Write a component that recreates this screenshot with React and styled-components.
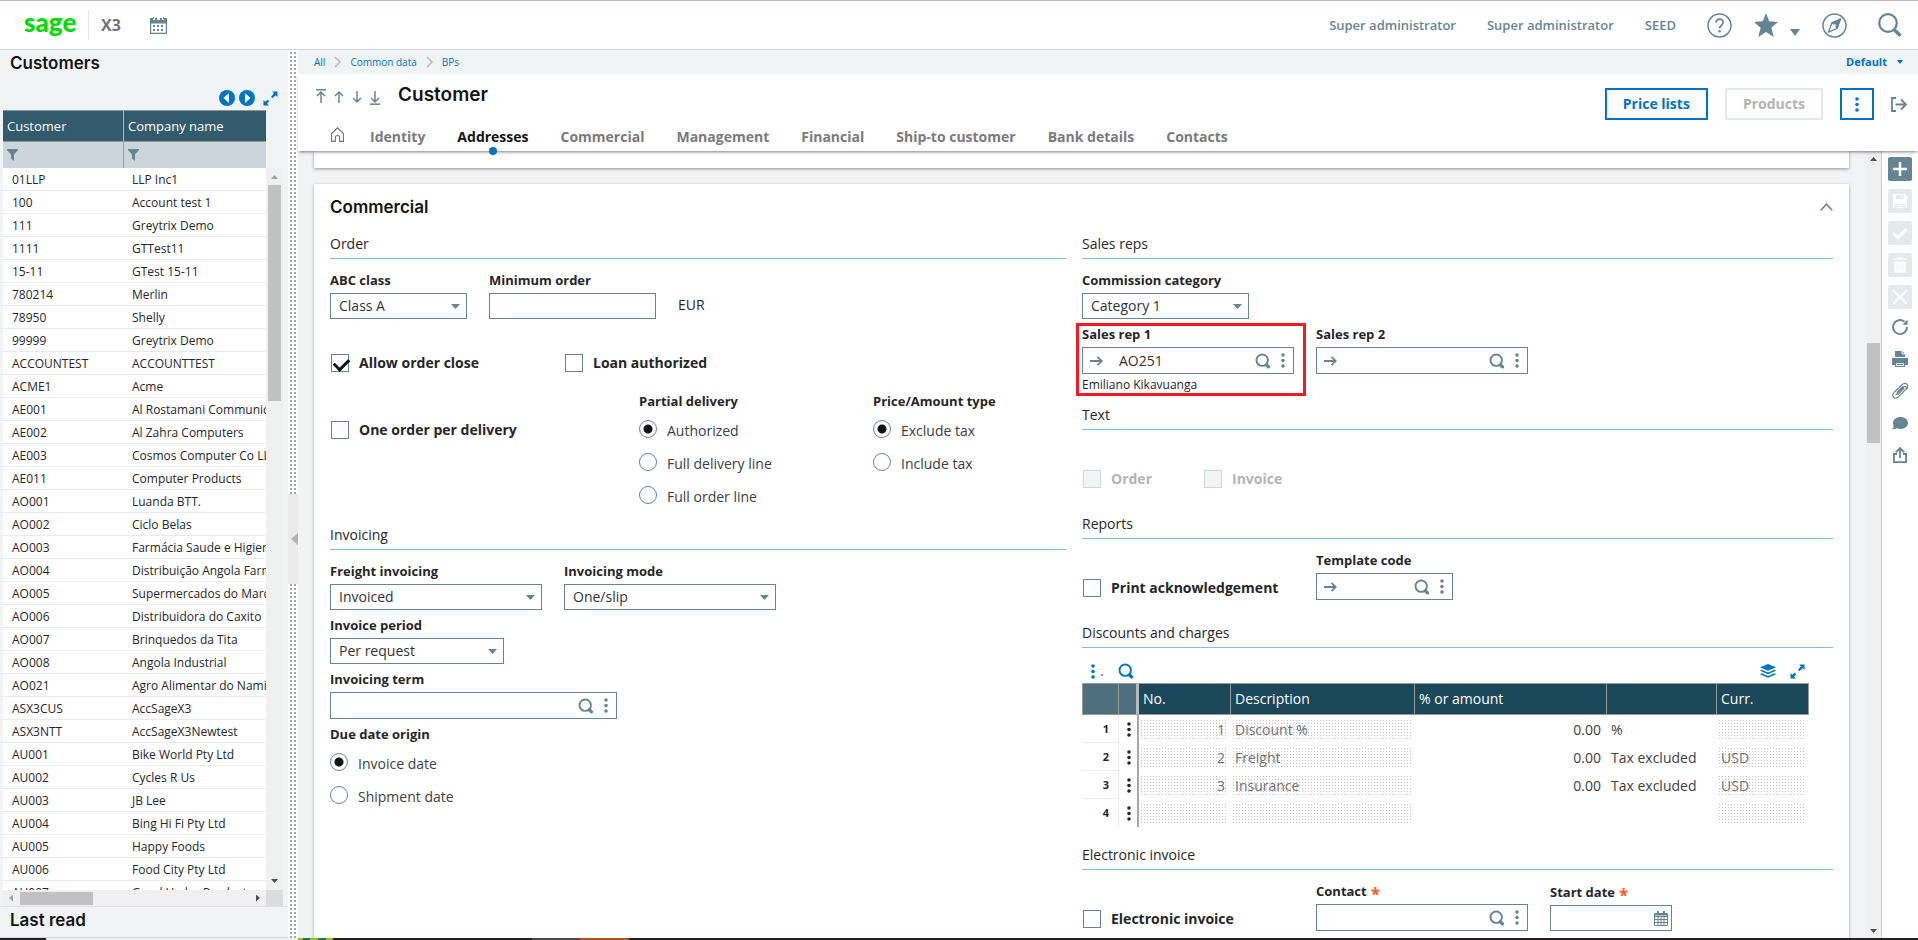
import { Fragment, useState } from 'react'
import styled, { createGlobalStyle } from 'styled-components';

const customers = [
    ['01LLP', 'LLP Inc1'],
    ['100', 'Account test 1'],
    ['111', 'Greytrix Demo'],
    ['1111', 'GTTest11'],
    ['15-11', 'GTest 15-11'],
    ['780214', 'Merlin'],
    ['78950', 'Shelly'],
    ['99999', 'Greytrix Demo'],
    ['ACCOUNTEST', 'ACCOUNTTEST'],
    ['ACME1', 'Acme'],
    ['AE001', 'Al Rostamani Communication'],
    ['AE002', 'Al Zahra Computers'],
    ['AE003', 'Cosmos Computer Co LLC'],
    ['AE011', 'Computer Products'],
    ['AO001', 'Luanda BTT.'],
    ['AO002', 'Ciclo Belas'],
    ['AO003', 'Farmácia Saude e Higiene'],
    ['AO004', 'Distribuição Angola Farma'],
    ['AO005', 'Supermercados do Marques'],
    ['AO006', 'Distribuidora do Caxito'],
    ['AO007', 'Brinquedos da Tita'],
    ['AO008', 'Angola Industrial'],
    ['AO021', 'Agro Alimentar do Namibe'],
    ['ASX3CUS', 'AccSageX3'],
    ['ASX3NTT', 'AccSageX3Newtest'],
    ['AU001', 'Bike World Pty Ltd'],
    ['AU002', 'Cycles R Us'],
    ['AU003', 'JB Lee'],
    ['AU004', 'Bing Hi Fi Pty Ltd'],
    ['AU005', 'Happy Foods'],
    ['AU006', 'Food City Pty Ltd'],
    ['AU007', 'Good Hydro Product'],
]

const tabs = ['Identity', 'Addresses', 'Commercial', 'Management', 'Financial', 'Ship-to customer', 'Bank details', 'Contacts']

const charges = [
    { no: '1', description: 'Discount %', amount: '0.00', type: '%', currency: '' },
    { no: '2', description: 'Freight', amount: '0.00', type: 'Tax excluded', currency: 'USD' },
    { no: '3', description: 'Insurance', amount: '0.00', type: 'Tax excluded', currency: 'USD' },
    { no: '', description: '', amount: '', type: '', currency: '' },
]

/* ---------- icons ---------- */

const SearchIcon = ({ size = 16 }) => (
    <svg width={size} height={size} viewBox="0 0 16 16" fill="none" stroke="currentColor">
        <circle cx="7.200" cy="7.200" r="5.700" strokeWidth="1.900" />
        <path d="m11.600 12 1.900 1.900" strokeWidth="3.200" strokeLinecap="round" />
    </svg>
)

const DotsIcon = () => (
    <svg width="4" height="15" viewBox="0 0 4 15" fill="currentColor">
        <circle cx="2" cy="2" r="1.8" />
        <circle cx="2" cy="7.5" r="1.8" />
        <circle cx="2" cy="13" r="1.8" />
    </svg>
)

const ArrowRightIcon = () => (
    <svg width="13" height="12" viewBox="0 0 13 12" fill="none" stroke="currentColor" strokeWidth="1.8">
        <path d="M0 6h11.5M7.5 1.8 11.8 6 7.5 10.2" />
    </svg>
)

const CaretIcon = ({ width = 9, height = 5 }) => (
    <svg width={width} height={height} viewBox="0 0 10 6" preserveAspectRatio="none" fill="currentColor">
        <path d="M0 0h10L5 6z" />
    </svg>
)

const ExpandIcon = () => (
    <svg width="15" height="15" viewBox="0 0 15 15" fill="currentColor">
        <path d="M9 .5h5.500V6l-1.800-1.800-3.400 3L8 5.800l3-3.500zM6 14.500H.5V9l1.800 1.800L4.700 8.700 6.200 10 4.100 12.700z" />
    </svg>
)

const CalendarIcon = () => (
    <svg width="17" height="17" viewBox="0 0 17 17" fill="currentColor">
        <path d="M0 1h3v2h2V1h2v2h3V1h2v2h2V1h3v16H0zM1.200 6.500v9.300h14.600V6.500z" fillRule="evenodd" />
        <path d="M3 0h1v2H3zM13 0h1v2h-1z" />
        <path d="M3 8h2v2H3zM7 8h2v2H7zM11 8h2v2h-2zM3 12h2v2H3zM7 12h2v2H7zM11 12h2v2h-2z" />
    </svg>
)

const DateIcon = () => (
    <svg width="14" height="15" viewBox="0 0 14 15" fill="none" stroke="currentColor">
        <path d="M.5 2.500h13v12H.5zM.5 5.500h13M.5 8.500h13M.5 11.500h13M4 5v9M7 5v9M10 5v9" />
        <path d="M4 0v4M10 0v4" strokeWidth="2" />
        <path d="M1 3.500h12" strokeWidth="2" />
    </svg>
)

const HelpIcon = () => (
    <svg width="25" height="25" viewBox="0 0 25 25" fill="none" stroke="currentColor">
        <circle cx="12.500" cy="12.500" r="11.500" strokeWidth="1.500" />
        <path d="M9 9.800c0-2.300 1.500-3.600 3.600-3.600s3.500 1.300 3.500 3.200c0 2.600-3.500 2.800-3.500 6.100" strokeWidth="1.700" />
        <circle cx="12.600" cy="18.300" r="1.200" fill="currentColor" stroke="none" />
    </svg>
)

const StarIcon = () => (
    <svg width="24" height="24" viewBox="0 0 24 24" fill="currentColor">
        <path d="m12 0 3.200 8.300 8.800.7-6.600 5.800 2.300 9.200L12 18.900 4.300 24l2.300-9.200L0 9l8.800-.7z" />
    </svg>
)

const CompassIcon = () => (
    <svg width="25" height="25" viewBox="0 0 25 25" fill="none" stroke="currentColor">
        <circle cx="12.500" cy="12.500" r="11.500" strokeWidth="1.500" />
        <path d="m18.500 6-3.300 9.300-8.700 3.700 3.400-9.200z" strokeWidth="1.300" />
        <path d="m18.500 6-8.600 3.800 1.600 1.300 2.500 2.800 1.200 1.400z" fill="currentColor" />
        <circle cx="12.500" cy="12.500" r="1.300" fill="#fff" stroke="none" />
    </svg>
)

const BigSearchIcon = () => (
    <svg width="24" height="24" viewBox="0 0 24 24" fill="none" stroke="currentColor">
        <circle cx="10" cy="10" r="8.800" strokeWidth="2.200" />
        <path d="m16 16.500 6.500 6.300" strokeWidth="3.400" />
    </svg>
)

const FunnelIcon = () => (
    <svg width="11" height="12" viewBox="0 0 11 12" fill="currentColor">
        <path d="M0 0h11v1L7 5.500V12L4 9.500v-4L0 1z" />
    </svg>
)

const RoundArrowIcon = ({ next }) => (
    <svg width="16" height="16" viewBox="0 0 16 16">
        <circle cx="8" cy="8" r="8" fill="currentColor" />
        <path d={next ? 'M6 3v10l5.500-5z' : 'M10 3v10L4.500 8z'} fill="#fff" />
    </svg>
)

const MoveIcon = ({ down, bar }) => (
    <svg width="10" height="16" viewBox="0 0 10 16" fill="none" stroke="currentColor" strokeWidth="1.500">
        <path d={down ? 'M5 2v11M1 9l4 4 4-4' : 'M5 14V3M1 7l4-4 4 4'} />
        {bar && <path d={down ? 'M0 15.200h10' : 'M0 .8h10'} />}
    </svg>
)

const HomeIcon = () => (
    <svg width="13" height="15" viewBox="0 0 13 15" fill="none" stroke="currentColor" strokeWidth="1.100">
        <path d="M.6 6.500 6.500.8l5.900 5.700v7.900H8.600V9.500q-2.100-2-4.200 0v4.900H.6z" />
    </svg>
)

const ExitIcon = () => (
    <svg width="16" height="15" viewBox="0 0 16 15" fill="none" stroke="currentColor" strokeWidth="1.800">
        <path d="M5 1H1v13h4M4.500 7.500h10M10 2.500l5 5-5 5" />
    </svg>
)

const LayersIcon = () => (
    <svg width="16" height="14" viewBox="0 0 16 14" fill="currentColor">
        <path d="m8 0 8 3.300-8 3.400-8-3.400z" />
        <path d="m1.500 5.800 6.500 2.700 6.500-2.700 1.500.9L8 10.200 0 6.700zM1.500 9.300 8 12l6.500-2.700 1.500.9-8 3.600-8-3.600z" />
    </svg>
)

const ChevronIcon = () => (
    <svg width="7" height="12" viewBox="0 0 7 12" fill="none" stroke="currentColor" strokeWidth="1.500">
        <path d="m1 1 5 5-5 5" />
    </svg>
)

const CollapseIcon = () => (
    <svg width="13" height="8" viewBox="0 0 13 8" fill="none" stroke="currentColor" strokeWidth="1.500">
        <path d="m.8 7.200 5.700-6 5.700 6" />
    </svg>
)

const railIcons = {
    add: <path d="M9 2v14M2 9h14" stroke="currentColor" strokeWidth="2.400" />,
    save: <path d="M2 2h12l2 2v12h-2v-4H4v4H2zM5 3v4h8V3zM5.500 13h7v1h-7zM5.500 15h7v1h-7zM10.500 3.800h1.500v2h-1.500z" fill="currentColor" fillRule="evenodd" />,
    valid: <path d="m2.500 9.500 4.500 4L15.500 5" fill="none" stroke="currentColor" strokeWidth="2.800" />,
    remove: <path d="M6 2V1h6v1h4v2H2V2zM3 5h12v10l-1 2H4l-1-2zM6 7.500v7M9 7.500v7M12 7.500v7" fill="currentColor" stroke="#e4eaec" strokeWidth=".8" />,
    cancel: <path d="m2.500 2.500 13 13M15.500 2.500l-13 13" stroke="currentColor" strokeWidth="2" />,
    refresh: (
        <>
            <path d="M16 9a7 7 0 1 1-2.500-5.300" fill="none" stroke="currentColor" strokeWidth="1.900" />
            <path d="M16.600 1.500v5.200h-5z" fill="currentColor" />
        </>
    ),
    print: (
        <>
            <path d="M4 1h7l3 3v3H4zM1 8h16v7h-3v-3H4v3H1z" fill="currentColor" />
            <path d="M4.600 12.600h8.800v3.900H4.600zM6 14.500h6" fill="none" stroke="currentColor" strokeWidth="1.200" />
            <path d="M11 1v3h3" fill="none" stroke="#fff" strokeWidth=".8" />
        </>
    ),
    attach: <path d="m4.500 13.200 8.200-8.400q1.400-1 2.300 0 .9 1-.1 2.200L8 14.300q-2.900 3-5.400 1.200-2-2.300.4-5.200L10.700 3q3-2.700 5.200-.7 2 2.200-.4 5.100M5.900 10.300l6-6M6.600 12.800l6.500-6.700" fill="none" stroke="currentColor" strokeWidth="1.200" />,
    comment: <path d="M9.500 3c4.300 0 7.500 2.600 7.500 6s-3.200 6-7.500 6q-2 0-3.500-.7Q4 15.500 1 15.300q1.700-1.200 1.600-2.600Q2 11 2 9c0-3.400 3.200-6 7.500-6z" fill="currentColor" />,
    share: <path d="M6 8H2.900v8.100h12.200V8H12M9 12V2.500M4.800 6.300 9 2l4.200 4.300" fill="none" stroke="currentColor" strokeWidth="1.800" />,
}

/* ---------- form parts ---------- */

const SelectField = ({ id, label, value, width }) => (
    <Field>
        <FieldLabel htmlFor={id}>{label}</FieldLabel>
        <SelectBox $width={width}>
            <select id={id} defaultValue={value}>
                <option>{value}</option>
            </select>
            <CaretIcon />
        </SelectBox>
    </Field>
)

const LookupField = ({ id, label, value = '', width, jump, required, note }) => (
    <Field>
        <FieldLabel htmlFor={id}>{label}{required && <Required>*</Required>}</FieldLabel>
        <LookupBox $width={width}>
            {jump && <BoxButton aria-label="Open record"><ArrowRightIcon /></BoxButton>}
            <input id={id} defaultValue={value} />
            <BoxButton aria-label="Search"><SearchIcon /></BoxButton>
            <BoxButton aria-label="Actions"><DotsIcon /></BoxButton>
        </LookupBox>
        {note && <Note>{note}</Note>}
    </Field>
)

const Check = ({ label, checked, disabled }) => (
    <CheckLabel $disabled={disabled}>
        <input type="checkbox" defaultChecked={checked} disabled={disabled} />
        {label}
    </CheckLabel>
)

const RadioGroup = ({ name, label, options }) => {
    const [selected, setSelected] = useState(options[0])

    return (
        <RadioSet role="radiogroup" aria-label={label}>
            <FieldLabel as="p">{label}</FieldLabel>
            {options.map((option) => (
                <RadioLabel key={option}>
                    <input type="radio" name={name} checked={selected === option} onChange={() => setSelected(option)} />
                    <span>{option}</span>
                </RadioLabel>
            ))}
        </RadioSet>
    )
}

/* ---------- page areas ---------- */

const Sidebar = () => (
    <SidebarArea>
        <SideTitle>Customers</SideTitle>
        <SideTools>
            <IconButton $blue aria-label="Previous"><RoundArrowIcon /></IconButton>
            <IconButton $blue aria-label="Next"><RoundArrowIcon next /></IconButton>
            <IconButton $blue aria-label="Expand"><ExpandIcon /></IconButton>
        </SideTools>
        <ListFrame>
            <ListView>
                <CustomerTable>
                    <colgroup>
                        <col className="code" />
                        <col />
                    </colgroup>
                    <thead>
                        <tr>
                            <th>Customer</th>
                            <th>Company name</th>
                        </tr>
                        <tr>
                            <td><FunnelIcon /></td>
                            <td><FunnelIcon /></td>
                        </tr>
                    </thead>
                    <tbody>
                        {customers.map(([code, company]) => (
                            <tr key={code}>
                                <td>{code}</td>
                                <td>{company}</td>
                            </tr>
                        ))}
                    </tbody>
                </CustomerTable>
            </ListView>
            <SideScroll>
                <ScrollArrow $dir="up" $dim />
                <i />
                <ScrollArrow $dir="down" />
            </SideScroll>
        </ListFrame>
        <SideScrollX>
            <div>
                <ScrollArrow $dir="left" $dim />
                <i />
                <ScrollArrow $dir="right" />
            </div>
        </SideScrollX>
        <LastRead>Last read</LastRead>
    </SidebarArea>
)

const ChargesTable = () => (
    <ChargesArea>
        <ChargesTools>
            <IconButton $blue aria-label="Actions"><DotsIcon /><span>.</span></IconButton>
            <IconButton $blue aria-label="Search"><SearchIcon /></IconButton>
            <IconButton $blue aria-label="Layers"><LayersIcon /></IconButton>
            <IconButton $blue aria-label="Expand"><ExpandIcon /></IconButton>
        </ChargesTools>
        <Charges>
            <colgroup>
                <col className="line" />
                <col className="menu" />
                <col className="no" />
                <col className="description" />
                <col className="amount" />
                <col className="type" />
                <col />
            </colgroup>
            <thead>
                <tr>
                    <th />
                    <th />
                    <th>No.</th>
                    <th>Description</th>
                    <th>% or amount</th>
                    <th />
                    <th>Curr.</th>
                </tr>
            </thead>
            <tbody>
                {charges.map((row, index) => (
                    <tr key={index}>
                        <th>{index + 1}</th>
                        <td className="menu"><button aria-label={`Line ${index + 1}`}><DotsIcon /></button></td>
                        <td><CellText $locked $right>{row.no}</CellText></td>
                        <td><CellText $locked>{row.description}</CellText></td>
                        <td><CellText $right>{row.amount}</CellText></td>
                        <td><CellText>{row.type}</CellText></td>
                        <td><CellText $locked>{row.currency}</CellText></td>
                    </tr>
                ))}
            </tbody>
        </Charges>
    </ChargesArea>
)

const App = () => {
    const [activeTab, setActiveTab] = useState('Addresses')

    return (
        <Page>
            <GlobalStyle />
            <TopBar>
                <Logo href="#">sage</Logo>
                <Product>X3</Product>
                <IconButton aria-label="Calendar"><CalendarIcon /></IconButton>
                <TopLinks>
                    <a href="#">Super administrator</a>
                    <a href="#">Super administrator</a>
                    <a href="#">SEED</a>
                    <TopIcons>
                        <IconButton aria-label="Help"><HelpIcon /></IconButton>
                        <IconButton aria-label="Favorites"><StarIcon /><CaretIcon width={10} height={7} /></IconButton>
                        <IconButton aria-label="Navigation"><CompassIcon /></IconButton>
                    </TopIcons>
                    <IconButton aria-label="Search"><BigSearchIcon /></IconButton>
                </TopLinks>
            </TopBar>

            <Body>
                <Sidebar />
                <Splitter><button aria-label="Collapse list" /></Splitter>

                <Main>
                    <Breadcrumb>
                        {['All', 'Common data', 'BPs'].map((item, index) => (
                            <Fragment key={item}>
                                {index > 0 && <ChevronIcon />}
                                <a href="#">{item}</a>
                            </Fragment>
                        ))}
                        <button>Default <CaretIcon width={6} height={4} /></button>
                    </Breadcrumb>

                    <Header>
                        <div>
                            <TitleRow>
                                <IconButton aria-label="First"><MoveIcon bar /></IconButton>
                                <IconButton aria-label="Previous"><MoveIcon /></IconButton>
                                <IconButton aria-label="Next"><MoveIcon down /></IconButton>
                                <IconButton aria-label="Last"><MoveIcon down bar /></IconButton>
                                <h1>Customer</h1>
                            </TitleRow>
                            <Tabs>
                                <a href="#" aria-label="Home"><HomeIcon /></a>
                                {tabs.map((tab) => (
                                    <Tab key={tab} $active={tab === activeTab} onClick={() => setActiveTab(tab)}>{tab}</Tab>
                                ))}
                            </Tabs>
                        </div>
                        <Actions>
                            <ActionButton>Price lists</ActionButton>
                            <ActionButton disabled>Products</ActionButton>
                            <ActionButton $narrow aria-label="More"><DotsIcon /></ActionButton>
                            <IconButton aria-label="Exit"><ExitIcon /></IconButton>
                        </Actions>
                    </Header>

                    <Work>
                        <Sheet>
                            <PreviousCard />
                            <Card>
                                <CardTitle>
                                    <h2>Commercial</h2>
                                    <IconButton aria-label="Collapse"><CollapseIcon /></IconButton>
                                </CardTitle>
                                <Columns>
                                    <div>
                                        <SectionTitle>Order</SectionTitle>
                                        <OrderRow>
                                            <SelectField id="abc" label="ABC class" value="Class A" width={137} />
                                            <Field>
                                                <FieldLabel htmlFor="minimum">Minimum order</FieldLabel>
                                                <PlainInput id="minimum" />
                                            </Field>
                                            <Unit>EUR</Unit>
                                        </OrderRow>
                                        <OrderChecks>
                                            <Check label="Allow order close" checked />
                                            <Check label="Loan authorized" />
                                        </OrderChecks>
                                        <DeliveryRow>
                                            <Check label="One order per delivery" />
                                            <RadioGroup name="delivery" label="Partial delivery" options={['Authorized', 'Full delivery line', 'Full order line']} />
                                            <RadioGroup name="price" label="Price/Amount type" options={['Exclude tax', 'Include tax']} />
                                        </DeliveryRow>

                                        <SectionTitle>Invoicing</SectionTitle>
                                        <FieldRow>
                                            <SelectField id="freight" label="Freight invoicing" value="Invoiced" width={212} />
                                            <SelectField id="mode" label="Invoicing mode" value="One/slip" width={212} />
                                        </FieldRow>
                                        <FieldRow>
                                            <SelectField id="period" label="Invoice period" value="Per request" width={174} />
                                        </FieldRow>
                                        <FieldRow>
                                            <LookupField id="term" label="Invoicing term" width={287} />
                                        </FieldRow>
                                        <RadioGroup name="due" label="Due date origin" options={['Invoice date', 'Shipment date']} />
                                    </div>

                                    <div>
                                        <SectionTitle>Sales reps</SectionTitle>
                                        <FieldRow>
                                            <SelectField id="commission" label="Commission category" value="Category 1" width={167} />
                                        </FieldRow>
                                        <RepRow>
                                            <Highlight>
                                                <LookupField id="rep1" label="Sales rep 1" value="AO251" width={212} jump note="Emiliano Kikavuanga" />
                                            </Highlight>
                                            <LookupField id="rep2" label="Sales rep 2" width={212} jump />
                                        </RepRow>

                                        <SectionTitle>Text</SectionTitle>
                                        <TextChecks>
                                            <Check label="Order" disabled />
                                            <Check label="Invoice" disabled />
                                        </TextChecks>

                                        <SectionTitle>Reports</SectionTitle>
                                        <CheckFieldRow>
                                            <Check label="Print acknowledgement" />
                                            <LookupField id="template" label="Template code" width={137} jump />
                                        </CheckFieldRow>

                                        <SectionTitle>Discounts and charges</SectionTitle>
                                        <ChargesTable />

                                        <SectionTitle>Electronic invoice</SectionTitle>
                                        <CheckFieldRow>
                                            <Check label="Electronic invoice" />
                                            <LookupField id="contact" label="Contact" width={212} required />
                                            <Field>
                                                <FieldLabel htmlFor="start">Start date<Required>*</Required></FieldLabel>
                                                <LookupBox $width={122} $date>
                                                    <input id="start" />
                                                    <BoxButton aria-label="Pick a date"><DateIcon /></BoxButton>
                                                </LookupBox>
                                            </Field>
                                        </CheckFieldRow>
                                    </div>
                                </Columns>
                            </Card>
                        </Sheet>
                        <MainScroll>
                            <ScrollArrow $dir="up" />
                            <i />
                            <ScrollArrow $dir="down" />
                        </MainScroll>
                        <Rail>
                            <RailButton $filled aria-label="New"><svg viewBox="0 0 18 18">{railIcons.add}</svg></RailButton>
                            {['save', 'valid', 'remove', 'cancel'].map((name) => (
                                <RailButton key={name} disabled aria-label={name}><svg viewBox="0 0 18 18">{railIcons[name]}</svg></RailButton>
                            ))}
                            <RailGroup>
                                {['refresh', 'print', 'attach', 'comment', 'share'].map((name) => (
                                    <RailButton key={name} aria-label={name}><svg viewBox="0 0 18 18">{railIcons[name]}</svg></RailButton>
                                ))}
                            </RailGroup>
                        </Rail>
                    </Work>
                </Main>
            </Body>
            <BottomStrip />
        </Page>
    )
}

export default App

const GlobalStyle = createGlobalStyle`
    * {
        box-sizing: border-box;
    }

    body {
        margin: 0;
        color: #262626;
        font-family: 'Open Sans', 'Noto Sans', sans-serif;
        font-size: 14px;
        line-height: 20px;
    }

    h1, h2, p {
        margin: 0;
    }

    h1, h2 {
        color: #141414;
        font-family: 'Inter', sans-serif;
        font-size: 17px;
        font-weight: 600;
        line-height: 24px;
    }

    h1 {
        font-size: 19px;
    }

    a {
        color: inherit;
        text-decoration: none;
    }

    button, input, select {
        font: inherit;
        color: inherit;
        margin: 0;
    }

    button {
        cursor: pointer;
        padding: 0;
        border: none;
        background: none;
    }

    svg {
        display: block;
        flex: none;
    }
`

const Page = styled.div`
    height: 100vh;
    display: flex;
    flex-direction: column;
    overflow: hidden;
`

const IconButton = styled.button`
    display: flex;
    align-items: center;
    gap: 12px;
    color: ${({ $blue }) => ($blue ? '#0073c2' : '#668592')};
`

const TopBar = styled.header`
    height: 50px;
    flex: none;
    display: flex;
    align-items: center;
    padding: 0 16px 0 24px;
    background: #fff;
    border-top: 1px solid #c9b2ba;
    border-bottom: 1px solid #ccd6db;
`

const Logo = styled.a`
    width: 65px;
    height: 30px;
    border-right: 1px solid #dfe5e8;
    color: #00dc00;
    font-family: 'Lato', sans-serif;
    font-size: 26px;
    font-weight: 900;
    line-height: 24px;
`

const Product = styled.span`
    width: 61px;
    padding-left: 12px;
    color: #737373;
    font-size: 16px;
    font-weight: 700;
`

const TopLinks = styled.nav`
    margin-left: auto;
    display: flex;
    align-items: center;
    gap: 31px;
    color: #668592;
    font-size: 13px;
    font-weight: 600;
`

const TopIcons = styled.div`
    display: flex;
    align-items: center;
    gap: 22px;

    svg + svg {
        margin-top: 14px;
    }
`

const Body = styled.div`
    flex: 1;
    min-height: 0;
    display: flex;
`

const SidebarArea = styled.aside`
    width: 288px;
    flex: none;
    display: flex;
    flex-direction: column;
    background: #f0f4f5;
`

const SideTitle = styled.h2`
    padding: 1px 10px 0;
`

const SideTools = styled.div`
    height: 35px;
    padding: 11px 10px 0 0;
    display: flex;
    align-items: center;
    justify-content: flex-end;
    gap: 4px;

    button:last-child {
        margin-left: 4px;
    }
`

const ListFrame = styled.div`
    flex: 1;
    min-height: 0;
    display: flex;
    padding: 0 5px 0 3px;
`

const ListView = styled.div`
    flex: 1;
    min-width: 0;
    overflow: hidden;
`

const CustomerTable = styled.table`
    width: 100%;
    table-layout: fixed;
    border-collapse: separate;
    border-spacing: 0;
    font-size: 12px;

    .code {
        width: 120px;
    }

    th {
        height: 32px;
        padding: 0 4px;
        border-top: 1px solid #8b9a94;
        border-bottom: 1px solid #8b9a94;
        background: #335b6d;
        color: #fff;
        font-size: 13px;
        font-weight: 400;
        text-align: left;
    }

    th:last-child {
        border-left: 1px solid #a9bac2;
    }

    thead td {
        height: 26px;
        padding: 0 4px;
        background: #ccd5db;
        color: #668592;
    }

    thead td:last-child {
        border-left: 1px solid #8fa5ae;
    }

    tbody td {
        height: 23px;
        padding: 2px 0 0 9px;
        border-bottom: 1px solid #e8ebec;
        background: #fff;
        line-height: 20px;
        white-space: nowrap;
        overflow: hidden;
    }
`

const SideScroll = styled.div`
    width: 17px;
    margin-top: 58px;
    padding: 7px 2px;
    display: flex;
    flex-direction: column;
    align-items: center;
    background: #f0f0f0;

    i {
        width: 13px;
        height: 216px;
        margin: 6px 0 auto;
        background: #c1c1c1;
    }
`

const SideScrollX = styled.div`
    height: 17px;
    flex: none;
    padding: 0 5px 0 3px;
    background: linear-gradient(#dcdcdc, #dcdcdc) content-box;
    border-bottom: 1px solid #dfdfdf;

    div {
        height: 16px;
        width: calc(100% - 17px);
        padding: 0 6px;
        display: flex;
        align-items: center;
        background: #f0f0f0;
    }

    i {
        width: 73px;
        height: 13px;
        margin: 0 auto 0 7px;
        background: #c1c1c1;
    }
`

const arrows = {
    up: '50% 0, 100% 100%, 0 100%',
    down: '0 0, 100% 0, 50% 100%',
    left: '100% 0, 100% 100%, 0 50%',
    right: '0 0, 100% 50%, 0 100%',
}

const ScrollArrow = styled.span`
    flex: none;
    width: ${({ $dir }) => ($dir === 'up' || $dir === 'down' ? 7 : 4)}px;
    height: ${({ $dir }) => ($dir === 'up' || $dir === 'down' ? 4 : 7)}px;
    background: ${({ $dim }) => ($dim ? '#a3a3a3' : '#505050')};
    clip-path: polygon(${({ $dir }) => arrows[$dir]});
`

const LastRead = styled.h2`
    height: 31px;
    flex: none;
    padding: 1px 10px;
    border-bottom: 1px solid #d5d9da;
`

const Splitter = styled.div`
    width: 10px;
    flex: none;
    display: flex;
    align-items: center;
    padding-top: 90px;
    background:
        linear-gradient(90deg, #fff 2px, transparent 2px) 0 0 / 4px 4px,
        linear-gradient(#fff 2px, transparent 2px) 0 0 / 4px 4px,
        #a6a6a6;
    border-right: 2px solid #fff;

    button {
        width: 10px;
        height: 90px;
        margin-right: -2px;
        flex: none;
        background: #ebeae9;
    }

    button::after {
        content: '';
        display: block;
        margin-left: auto;
        width: 7px;
        height: 12px;
        background: #b3b3b3;
        clip-path: polygon(100% 0, 100% 100%, 0 50%);
    }
`

const Main = styled.main`
    flex: 1;
    min-width: 0;
    display: flex;
    flex-direction: column;
`

const Breadcrumb = styled.nav`
    height: 24px;
    flex: none;
    display: flex;
    align-items: center;
    gap: 9px;
    padding: 0 15px 0 16px;
    background: #f0f4f5;
    color: #0073c2;
    font-size: 10px;

    svg {
        color: #b5b9bb;
    }

    button {
        margin-left: auto;
        display: flex;
        align-items: center;
        gap: 10px;
        font-size: 11px;
        font-weight: 700;
    }

    button svg {
        color: #0073c2;
    }
`

const Header = styled.div`
    position: relative;
    z-index: 1;
    flex: none;
    display: flex;
    justify-content: space-between;
    padding: 9px 11px 4px 18px;
    background: #fff;
    box-shadow: 0 2px 3px -1px rgba(0, 0, 0, 0.5);
`

const TitleRow = styled.div`
    display: flex;
    align-items: center;
    gap: 8px;

    h1 {
        margin-left: 10px;
    }

    button {
        padding-top: 3px;
    }
`

const Tabs = styled.div`
    display: flex;
    align-items: center;
    gap: 32px;
    margin: 20px 0 0 15px;
    color: #737373;

    a {
        margin-right: -6px;
        margin-top: -6px;
    }
`

const Tab = styled.button`
    position: relative;
    color: ${({ $active }) => ($active ? '#141414' : '#7a7a7a')};
    font-weight: 700;

    &::after {
        content: '';
        display: ${({ $active }) => ($active ? 'block' : 'none')};
        position: absolute;
        left: calc(50% - 4px);
        bottom: -8px;
        width: 8px;
        height: 8px;
        border-radius: 50%;
        background: #0073c2;
    }
`

const Actions = styled.div`
    height: 32px;
    margin-top: 5px;
    display: flex;
    align-items: center;
    gap: 17px;
`

const ActionButton = styled.button`
    display: flex;
    align-items: center;
    justify-content: center;
    width: ${({ $narrow }) => ($narrow ? '34px' : 'auto')};
    height: 32px;
    padding: ${({ $narrow }) => ($narrow ? '0' : '0 16px')};
    border: 2px solid #0073c2;
    color: #0073c2;
    font-weight: 700;

    &:disabled {
        border-color: #e4eaec;
        color: #b3b3b3;
    }
`

const Work = styled.div`
    flex: 1;
    min-height: 0;
    display: flex;
    background: #f0f4f5;
`

const Sheet = styled.div`
    flex: 1;
    min-width: 0;
    display: flex;
    flex-direction: column;
    gap: 16px;
    padding: 0 17px 0 16px;
    overflow: hidden;
`

const PreviousCard = styled.div`
    height: 17px;
    flex: none;
    background: #fff;
    box-shadow: 0 1px 3px rgba(0, 0, 0, 0.4);
`

const Card = styled.section`
    flex: 1 0 auto;
    padding: 11px 16px;
    background: #fff;
    box-shadow: 0 1px 3px rgba(0, 0, 0, 0.35);
`

const CardTitle = styled.div`
    display: flex;
    align-items: center;
    justify-content: space-between;
    margin-bottom: 15px;
`

const Columns = styled.div`
    display: grid;
    grid-template-columns: minmax(0, 736fr) minmax(0, 751fr);
    gap: 16px;
`

const SectionTitle = styled.h3`
    margin: 0 0 11px;
    padding-bottom: 4px;
    border-bottom: 1px solid #84bce0;
    font-size: 14px;
    font-weight: 400;
    line-height: 20px;
`

const Field = styled.div`
    position: relative;
    display: flex;
    flex-direction: column;
    gap: 3px;
`

const FieldLabel = styled.label`
    height: 20px;
    font-size: 13px;
    font-weight: 700;
    line-height: 20px;
    white-space: nowrap;
`

const Required = styled.span`
    display: inline-block;
    margin-left: 4px;
    color: #ff5a1f;
    font-size: 17px;
    line-height: 12px;
    vertical-align: -5px;
`

const SelectBox = styled.div`
    width: ${({ $width }) => $width}px;
    height: 26px;
    display: flex;
    align-items: center;
    border: 1px solid #668592;
    color: #668592;

    select {
        appearance: none;
        width: 100%;
        height: 24px;
        padding: 0 24px 0 8px;
        border: none;
        background: none;
        color: #333;
    }

    svg {
        margin-left: -15px;
        margin-right: 6px;
        pointer-events: none;
    }
`

const LookupBox = styled.div`
    width: ${({ $width }) => $width}px;
    height: ${({ $date }) => ($date ? 26 : 27)}px;
    display: flex;
    align-items: center;
    gap: 10px;
    padding: ${({ $date }) => ($date ? '0 3px 0 7px' : '0 8px 0 7px')};
    border: 1px solid #668592;

    input {
        flex: 1;
        min-width: 0;
        height: 24px;
        padding: 0 0 0 6px;
        border: none;
        outline: none;
        background: none;
        color: #333;
    }
`

const BoxButton = styled.button`
    color: #668592;
`

const PlainInput = styled.input`
    width: 167px;
    height: 26px;
    padding: 0 8px;
    border: 1px solid #668592;
`

const Note = styled.p`
    font-size: 12px;
    line-height: 16px;
`

const FieldRow = styled.div`
    display: flex;
    gap: 22px;
    margin-bottom: 5px;
`

const OrderRow = styled(FieldRow)`
    margin-bottom: 35px;
`

const Unit = styled.span`
    align-self: flex-end;
    margin-bottom: 4px;
`

const CheckLabel = styled.label`
    display: flex;
    align-items: center;
    gap: 10px;
    height: 18px;
    padding-left: 1px;
    color: ${({ $disabled }) => ($disabled ? '#b3b3b3' : 'inherit')};
    font-weight: 700;

    input {
        appearance: none;
        position: relative;
        width: 18px;
        height: 18px;
        flex: none;
        border: 1px solid #668592;
        background: #fff;
    }

    input:disabled {
        border-color: #ccd6db;
        background: #f0f4f5;
    }

    input:checked::after {
        content: '';
        position: absolute;
        left: 2px;
        top: 3px;
        width: 12px;
        height: 7px;
        border: solid #141414;
        border-width: 0 0 3px 3px;
        transform: rotate(-45deg);
    }
`

const OrderChecks = styled.div`
    display: flex;
    margin-bottom: 19px;

    label {
        width: 234px;
    }
`

const RadioSet = styled.div`
    display: flex;
    flex-direction: column;
    gap: 15px;

    p {
        margin-bottom: -6px;
    }
`

const RadioLabel = styled.label`
    display: flex;
    align-items: center;
    gap: 10px;
    height: 18px;
    color: #404040;

    span {
        padding-top: 3px;
    }

    input {
        appearance: none;
        width: 18px;
        height: 18px;
        flex: none;
        border: 1px solid #668592;
        border-radius: 50%;
        background: #fff;
    }

    input:checked {
        background: radial-gradient(#141414 4px, #fff 5px);
    }
`

const DeliveryRow = styled.div`
    display: grid;
    grid-template-columns: 309px 234px 1fr;
    margin-bottom: 21px;

    > :first-child {
        margin-top: 30px;
    }
`

const RepRow = styled(FieldRow)`
    margin-bottom: 12px;
`

const Highlight = styled.div`
    position: relative;

    &::before {
        content: '';
        position: absolute;
        inset: -1px -12px -3px -6px;
        border: 3px solid #ee1c25;
        pointer-events: none;
    }
`

const TextChecks = styled.div`
    display: flex;
    padding: 29px 0 26px;

    label {
        width: 121px;
    }
`

const CheckFieldRow = styled.div`
    display: flex;
    align-items: flex-end;
    gap: 22px;
    margin-bottom: 23px;

    > label {
        width: 212px;
        margin-bottom: 3px;
    }
`

const ChargesArea = styled.div`
    margin-bottom: 18px;
    padding-right: 24px;
`

const ChargesTools = styled.div`
    height: 24px;
    display: flex;
    align-items: center;
    gap: 14px;
    padding: 0 4px 0 9px;

    > :first-child {
        gap: 5px;
    }

    > :nth-child(3) {
        margin-left: auto;
    }
`

const Charges = styled.table`
    width: 100%;
    table-layout: fixed;
    border-collapse: separate;
    border-spacing: 0;

    .line {
        width: 37px;
    }

    col.menu {
        width: 20px;
    }

    .no {
        width: 92px;
    }

    .description {
        width: 184px;
    }

    .amount {
        width: 192px;
    }

    .type {
        width: 110px;
    }

    thead th {
        height: 32px;
        padding: 0 4px;
        border: solid #9a9b90;
        border-width: 1px 1px 1px 0;
        background: #1a475a;
        color: #fff;
        font-weight: 400;
        text-align: left;
    }

    thead th:nth-child(-n + 2) {
        background: #4d6f7e;
    }

    thead th:first-child {
        border-left-width: 1px;
    }

    thead th:nth-child(2) {
        border-right: 3px solid #b9b9b9;
    }

    tbody th {
        height: 28px;
        padding: 0 9px 0 0;
        border: solid #ececec;
        border-width: 0 1px 1px 0;
        font-size: 11px;
        font-weight: 700;
        text-align: right;
    }

    tbody tr:last-child th {
        border-bottom: none;
    }

    td {
        padding: 0 3px 0 0;
    }

    td.menu {
        padding: 0 0 0 8px;
        border-right: 2px solid #a6a6a6;
    }

    td.menu button {
        display: block;
    }
`

const CellText = styled.div`
    height: 23px;
    padding: 0 3px 0 4px;
    color: ${({ $locked }) => ($locked ? '#707070' : '#404040')};
    line-height: 23px;
    text-align: ${({ $right }) => ($right ? 'right' : 'left')};
    background: ${({ $locked }) => ($locked
        ? `linear-gradient(90deg, #fff 2px, transparent 2px) 0 0 / 3px 3px,
           linear-gradient(#fff 2px, transparent 2px) 0 0 / 3px 3px,
           #c4c4c4`
        : 'none')};
`

const MainScroll = styled.div`
    width: 15px;
    flex: none;
    padding: 6px 1px 5px;
    display: flex;
    flex-direction: column;
    align-items: center;
    background: #f0f0f0;

    i {
        width: 13px;
        height: 100px;
        margin: 182px 0 auto;
        background: #c1c1c1;
    }
`

const Rail = styled.div`
    width: 37px;
    flex: none;
    display: flex;
    flex-direction: column;
    align-items: center;
    gap: 8px;
    padding-top: 6px;
    background: #fff;
    border-left: 1px solid #cfd2d3;
`

const RailButton = styled.button`
    width: 24px;
    height: 24px;
    display: flex;
    align-items: center;
    justify-content: center;
    border-radius: 2px;
    background: ${({ $filled }) => ($filled ? '#668592' : 'none')};
    color: ${({ $filled }) => ($filled ? '#fff' : '#668592')};

    &:disabled {
        background: #e4eaec;
        color: #fff;
    }

    svg {
        width: 18px;
        height: 18px;
    }
`

const RailGroup = styled.div`
    margin-top: -2px;
    display: flex;
    flex-direction: column;
    gap: 8px;
`

const BottomStrip = styled.footer`
    height: 2px;
    flex: none;
    background: linear-gradient(
        90deg,
        #231f20 46px,
        #efefef 46px 298px,
        #9dbb1e 298px 303px,
        #0b8068 303px 310px,
        #9dbb1e 310px 318px,
        #0b8068 318px 326px,
        #9dbb1e 326px 333px,
        #231f20 333px 532px,
        #4a4848 532px 580px,
        #a8571f 580px 629px,
        #231f20 629px
    );
`
